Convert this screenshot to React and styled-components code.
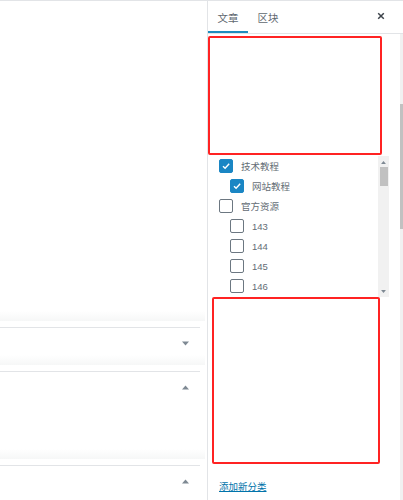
import React from "react";
import { styled, createGlobalStyle } from "styled-components";

const GlobalStyle = createGlobalStyle`
  * { box-sizing: border-box; }
  body {
    margin: 0;
    background: #fff;
    font-family: "Liberation Sans", "Noto Sans CJK SC", sans-serif;
  }
`;

const categories = [
  { label: "技术教程", level: 0, checked: true },
  { label: "网站教程", level: 1, checked: true },
  { label: "官方资源", level: 0, checked: false },
  { label: "143", level: 1, checked: false },
  { label: "144", level: 1, checked: false },
  { label: "145", level: 1, checked: false },
  { label: "146", level: 1, checked: false },
];

const Caret = ({ up }) => (
  <svg width="7" height="5" viewBox="0 0 7 5">
    {up ? <path d="M3.5 0.5L7 4.5H0z" fill="#7e8993" /> : <path d="M0 0.5h7L3.5 4.5z" fill="#7e8993" />}
  </svg>
);

const CloseIcon = () => (
  <svg width="8" height="8" viewBox="0 0 8 8">
    <path d="M1.2 1.2l5.6 5.6M6.8 1.2L1.2 6.8" stroke="#3c434a" strokeWidth="1.5" />
  </svg>
);

const Check = () => (
  <svg width="10" height="10" viewBox="0 0 10 10">
    <path d="M2 5.2l2.1 2.1L8.2 2.8" stroke="#fff" strokeWidth="1.4" fill="none" />
  </svg>
);

const App = () => {
  return (
    <>
      <GlobalStyle />
      <Frame>
        <Editor>
          <EditorCanvas />
          <Shade />
          <MetaBox>
            <MetaHeader>
              <Caret />
            </MetaHeader>
          </MetaBox>
          <Shade />
          <MetaBox>
            <MetaHeader>
              <Caret up />
            </MetaHeader>
            <MetaBody />
          </MetaBox>
          <Shade />
          <MetaBox>
            <MetaHeader>
              <Caret up />
            </MetaHeader>
          </MetaBox>
        </Editor>

        <Sidebar>
          <SidebarHeader>
            <Tab $active>文章</Tab>
            <Tab>区块</Tab>
            <CloseButton>
              <CloseIcon />
            </CloseButton>
          </SidebarHeader>
          <SidebarBody>
            <SidebarContent>
              <MarkBox $w={174} $h={119} $left={0} />
              <CategoryList>
                <Items>
                  {categories.map((c) => (
                    <Item key={c.label} $level={c.level}>
                      <Box $checked={c.checked}>{c.checked && <Check />}</Box>
                      <Label>{c.label}</Label>
                    </Item>
                  ))}
                </Items>
                <MiniScroll>
                  <Caret up />
                  <MiniThumb />
                  <MiniGrow />
                  <Caret />
                </MiniScroll>
              </CategoryList>
              <MarkBox $w={168} $h={167} $left={4} />
              <AddLink href="#">添加新分类</AddLink>
            </SidebarContent>
            <ScrollTrack>
              <ScrollThumb />
            </ScrollTrack>
          </SidebarBody>
        </Sidebar>
      </Frame>
    </>
  );
};

const Frame = styled.div`
  display: flex;
  width: 403px;
  height: 500px;
  overflow: hidden;
  border-top: 1px solid #e2e4e7;
`;

const Editor = styled.div`
  width: 208px;
  flex-shrink: 0;
  display: flex;
  flex-direction: column;
  border-right: 1px solid #e2e4e7;
`;

const EditorCanvas = styled.div`
  height: 310px;
  flex-shrink: 0;
`;

const Shade = styled.div`
  height: 10px;
  flex-shrink: 0;
  margin-right: 2px;
  margin-bottom: 6px;
  background: linear-gradient(#ffffff, #f6f7f7);
`;

const MetaBox = styled.section`
  margin-right: 7px;
  border-top: 1px solid #e2e4e7;
  flex-shrink: 0;
`;

const MetaHeader = styled.div`
  height: 27px;
  display: flex;
  justify-content: flex-end;
  align-items: flex-start;
  padding: 13px 11px 0 0;
`;

const MetaBody = styled.div`
  height: 50px;
`;

const Sidebar = styled.div`
  flex: 1;
  display: flex;
  flex-direction: column;
  min-width: 0;
`;

const SidebarHeader = styled.div`
  height: 33px;
  display: flex;
  align-items: stretch;
  border-bottom: 1px solid #e2e4e7;
  flex-shrink: 0;
`;

const Tab = styled.div`
  width: 40px;
  display: flex;
  align-items: center;
  justify-content: center;
  padding-top: 1px;
  font-size: 10.5px;
  color: #5f6870;
  box-shadow: ${(p) => (p.$active ? "inset 0 -2px 0 #1e8cbe" : "none")};
`;

const CloseButton = styled.div`
  margin-left: auto;
  width: 30px;
  display: flex;
  align-items: center;
  justify-content: center;
  margin-right: 7px;
  padding-bottom: 2px;
`;

const SidebarBody = styled.div`
  flex: 1;
  display: flex;
`;

const SidebarContent = styled.div`
  width: 192px;
  flex-shrink: 0;
  display: flex;
  flex-direction: column;
  padding-top: 2px;
`;

const MarkBox = styled.div`
  width: ${(p) => p.$w}px;
  height: ${(p) => p.$h}px;
  margin-left: ${(p) => p.$left}px;
  border: 2px solid #ff2323;
  border-radius: 2px;
  flex-shrink: 0;
`;

const CategoryList = styled.div`
  width: 181px;
  height: 141px;
  display: flex;
  flex-shrink: 0;
  margin-top: 1px;
`;

const Items = styled.div`
  flex: 1;
  display: flex;
  flex-direction: column;
`;

const Item = styled.div`
  height: 20px;
  display: flex;
  align-items: center;
  padding-left: ${(p) => 11 + p.$level * 11}px;
`;

const Box = styled.div`
  width: 14px;
  height: 14px;
  border-radius: 2px;
  display: flex;
  align-items: center;
  justify-content: center;
  border: 1px solid ${(p) => (p.$checked ? "#1a86c4" : "#6c7781")};
  background: ${(p) => (p.$checked ? "#1a86c4" : "#fff")};
`;

const Label = styled.span`
  margin-left: 8px;
  font-size: 9.5px;
  color: #646d75;
`;

const MiniScroll = styled.div`
  width: 11px;
  display: flex;
  flex-direction: column;
  align-items: center;
  background: #f1f1f1;
  padding: 4px 0 3px;
  svg {
    transform: scale(0.7);
  }
`;

const MiniThumb = styled.div`
  width: 8px;
  height: 19px;
  margin-top: 2px;
  background: #c1c1c1;
`;

const MiniGrow = styled.div`
  flex: 1;
`;

const AddLink = styled.a`
  margin: 15px 0 0 11px;
  font-size: 9.5px;
  color: #0073aa;
  text-decoration: underline;
  align-self: flex-start;
`;

const ScrollTrack = styled.div`
  flex: 1;
  background: #f1f1f1;
  display: flex;
  flex-direction: column;
`;

const ScrollThumb = styled.div`
  margin-top: 70px;
  height: 125px;
  background: #c1c1c1;
`;

export default App;
